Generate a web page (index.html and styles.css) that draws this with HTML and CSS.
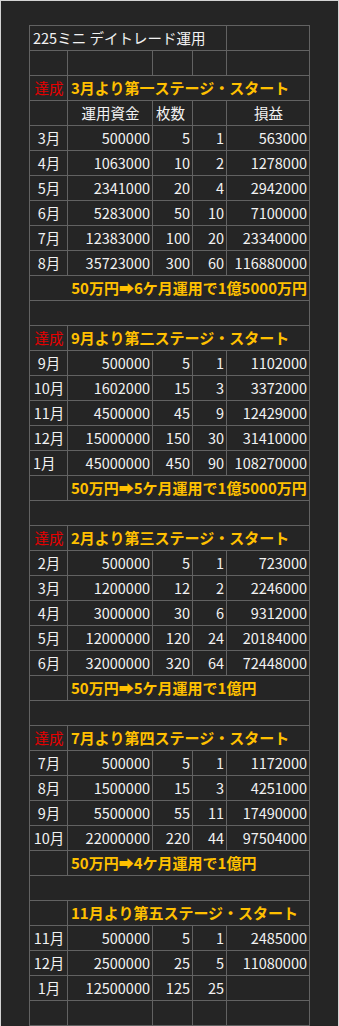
FILE: index.html
```html
<!DOCTYPE html>
<html lang="ja">
<head>
<meta charset="utf-8">
<title>225ミニ デイトレード運用</title>
<link rel="stylesheet" href="styles.css">
</head>
<body>
<div class="frame">
<table class="grid">
<colgroup><col class="c1"><col class="c2"><col class="c3"><col class="c4"><col class="c5"></colgroup>
<tr><td colspan="4" class="title">225ミニ デイトレード運用</td><td></td></tr>
<tr><td></td><td></td><td></td><td></td><td></td></tr>

<tr><td class="ok">達成</td><td colspan="4" class="stage">3月より第一ステージ・スタート</td></tr>
<tr><td></td><td class="c">運用資金</td><td class="l">枚数</td><td></td><td class="c">損益</td></tr>
<tr><td class="m">3月</td><td class="n">500000</td><td class="n">5</td><td class="n">1</td><td class="n">563000</td></tr>
<tr><td class="m">4月</td><td class="n">1063000</td><td class="n">10</td><td class="n">2</td><td class="n">1278000</td></tr>
<tr><td class="m">5月</td><td class="n">2341000</td><td class="n">20</td><td class="n">4</td><td class="n">2942000</td></tr>
<tr><td class="m">6月</td><td class="n">5283000</td><td class="n">50</td><td class="n">10</td><td class="n">7100000</td></tr>
<tr><td class="m">7月</td><td class="n">12383000</td><td class="n">100</td><td class="n">20</td><td class="n">23340000</td></tr>
<tr><td class="m">8月</td><td class="n">35723000</td><td class="n">300</td><td class="n">60</td><td class="n">116880000</td></tr>
<tr><td colspan="5" class="stage r">50万円➡6ケ月運用で1億5000万円</td></tr>
<tr><td colspan="5"></td></tr>

<tr><td class="ok">達成</td><td colspan="4" class="stage">9月より第二ステージ・スタート</td></tr>
<tr><td class="m">9月</td><td class="n">500000</td><td class="n">5</td><td class="n">1</td><td class="n">1102000</td></tr>
<tr><td class="m">10月</td><td class="n">1602000</td><td class="n">15</td><td class="n">3</td><td class="n">3372000</td></tr>
<tr><td class="m">11月</td><td class="n">4500000</td><td class="n">45</td><td class="n">9</td><td class="n">12429000</td></tr>
<tr><td class="m">12月</td><td class="n">15000000</td><td class="n">150</td><td class="n">30</td><td class="n">31410000</td></tr>
<tr><td class="l">1月</td><td class="n">45000000</td><td class="n">450</td><td class="n">90</td><td class="n">108270000</td></tr>
<tr><td></td><td colspan="4" class="stage">50万円➡5ケ月運用で1億5000万円</td></tr>
<tr><td colspan="5"></td></tr>

<tr><td class="ok">達成</td><td colspan="4" class="stage">2月より第三ステージ・スタート</td></tr>
<tr><td class="m">2月</td><td class="n">500000</td><td class="n">5</td><td class="n">1</td><td class="n">723000</td></tr>
<tr><td class="m">3月</td><td class="n">1200000</td><td class="n">12</td><td class="n">2</td><td class="n">2246000</td></tr>
<tr><td class="m">4月</td><td class="n">3000000</td><td class="n">30</td><td class="n">6</td><td class="n">9312000</td></tr>
<tr><td class="m">5月</td><td class="n">12000000</td><td class="n">120</td><td class="n">24</td><td class="n">20184000</td></tr>
<tr><td class="m">6月</td><td class="n">32000000</td><td class="n">320</td><td class="n">64</td><td class="n">72448000</td></tr>
<tr><td></td><td colspan="4" class="stage">50万円➡5ケ月運用で1億円</td></tr>
<tr><td colspan="5"></td></tr>

<tr><td class="ok">達成</td><td colspan="4" class="stage">7月より第四ステージ・スタート</td></tr>
<tr><td class="m">7月</td><td class="n">500000</td><td class="n">5</td><td class="n">1</td><td class="n">1172000</td></tr>
<tr><td class="m">8月</td><td class="n">1500000</td><td class="n">15</td><td class="n">3</td><td class="n">4251000</td></tr>
<tr><td class="m">9月</td><td class="n">5500000</td><td class="n">55</td><td class="n">11</td><td class="n">17490000</td></tr>
<tr><td class="m">10月</td><td class="n">22000000</td><td class="n">220</td><td class="n">44</td><td class="n">97504000</td></tr>
<tr><td></td><td colspan="4" class="stage">50万円➡4ケ月運用で1億円</td></tr>
<tr><td colspan="5"></td></tr>

<tr><td></td><td colspan="4" class="stage">11月より第五ステージ・スタート</td></tr>
<tr><td class="m">11月</td><td class="n">500000</td><td class="n">5</td><td class="n">1</td><td class="n">2485000</td></tr>
<tr><td class="m">12月</td><td class="n">2500000</td><td class="n">25</td><td class="n">5</td><td class="n">11080000</td></tr>
<tr><td class="m">1月</td><td class="n">12500000</td><td class="n">125</td><td class="n">25</td><td></td></tr>
<tr><td></td><td></td><td></td><td></td><td></td></tr>
</table>
</div>
</body>
</html>
```

FILE: styles.css
```css
html, body {
  margin: 0;
  padding: 0;
  background: #252525;
}

.frame {
  box-sizing: border-box;
  width: 339px;
  border: 1px solid #d4d4d4;
  padding: 24px 0 24px 28px;
  background: #252525;
}

.grid {
  border-collapse: collapse;
  table-layout: fixed;
  width: 281px;
  font-family: "Noto Sans CJK JP", "Noto Sans", sans-serif;
  font-size: 14.5px;
  color: #f2f2f2;
}

.c1 { width: 38px; }
.c2 { width: 85px; }
.c3 { width: 40px; }
.c4 { width: 34px; }
.c5 { width: 83px; }

.grid td {
  border: 1px solid #626262;
  height: 24px;
  padding: 0 2px 0 3px;
  box-sizing: border-box;
  white-space: nowrap;
  overflow: visible;
  line-height: 24px;
  vertical-align: middle;
}

.grid tr {
  height: 25px;
}

.title { text-align: left; }
.m { text-align: center; }
.c { text-align: center; }
.l { text-align: left; }
.n { text-align: right; }
.r { text-align: right; }

.ok {
  color: #e60000;
  text-align: center;
}

.stage {
  color: #ffc000;
  font-weight: bold;
  font-size: 15px;
  text-align: left;
}

.stage.r {
  text-align: right;
}
```
